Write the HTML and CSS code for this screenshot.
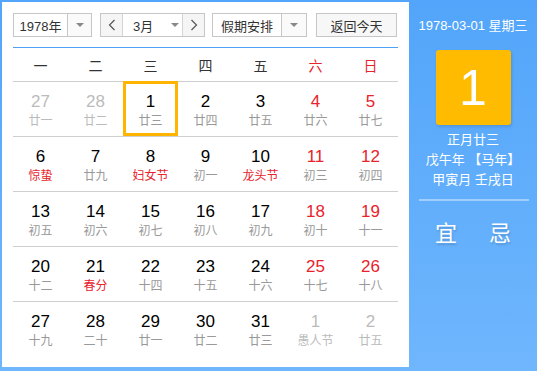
FILE: index.html
```html
<!DOCTYPE html>
<html lang="zh-CN">
<head>
    <meta charset="UTF-8">
    <title>万年历</title>
    <link rel="stylesheet" href="styles.css">
</head>
<body>
    <div class="calendar">
        <div class="main">
            <div class="controls">
                <div class="select year-select">
                    <span class="label">1978年</span>
                    <span class="arrow"><i class="tri"></i></span>
                </div>
                <div class="month-group">
                    <span class="nav-btn">
                        <svg width="8" height="12" viewBox="0 0 8 12"><polyline points="6.5,1 1.5,6 6.5,11" fill="none" stroke="#555" stroke-width="1.2"/></svg>
                    </span>
                    <span class="month-label">3月<i class="tri"></i></span>
                    <span class="nav-btn">
                        <svg width="8" height="12" viewBox="0 0 8 12"><polyline points="1.5,1 6.5,6 1.5,11" fill="none" stroke="#555" stroke-width="1.2"/></svg>
                    </span>
                </div>
                <div class="select holiday-select">
                    <span class="label">假期安排</span>
                    <span class="arrow"><i class="tri"></i></span>
                </div>
                <button class="today-btn">返回今天</button>
            </div>
            <div class="week-head">
                <span>一</span><span>二</span><span>三</span><span>四</span><span>五</span>
                <span class="weekend">六</span><span class="weekend">日</span>
            </div>
            <div id="days"></div>
        </div>
        <div class="side">
            <div class="side-date">1978-03-01 星期三</div>
            <div class="big-day">1</div>
            <div class="lunar-info">
                <p>正月廿三</p>
                <p>戊午年 【马年】</p>
                <p>甲寅月 壬戌日</p>
            </div>
            <div class="side-line"></div>
            <div class="yi-ji">
                <span>宜</span>
                <span>忌</span>
            </div>
        </div>
    </div>

    <script>
        // day, lunar text, flags: o = other month, f = festival, s = selected
        const weeks = [
            [[27, '廿一', 'o'], [28, '廿二', 'o'], [1, '廿三', 's'], [2, '廿四'], [3, '廿五'], [4, '廿六'], [5, '廿七']],
            [[6, '惊蛰', 'f'], [7, '廿九'], [8, '妇女节', 'f'], [9, '初一'], [10, '龙头节', 'f'], [11, '初三'], [12, '初四']],
            [[13, '初五'], [14, '初六'], [15, '初七'], [16, '初八'], [17, '初九'], [18, '初十'], [19, '十一']],
            [[20, '十二'], [21, '春分', 'f'], [22, '十四'], [23, '十五'], [24, '十六'], [25, '十七'], [26, '十八']],
            [[27, '十九'], [28, '二十'], [29, '廿一'], [30, '廿二'], [31, '廿三'], [1, '愚人节', 'o'], [2, '廿五', 'o']]
        ];

        const output = weeks.map(week => `
            <div class="week">
                ${week.map((d, i) => {
                    const flag = d[2] || '';
                    let cls = 'day';
                    if (i > 4) cls += ' weekend';
                    if (flag === 'o') cls += ' other';
                    if (flag === 's') cls += ' selected';
                    const lunarCls = flag === 'f' ? 'lunar festival' : 'lunar';
                    return `<div class="${cls}"><span class="num">${d[0]}</span><span class="${lunarCls}">${d[1]}</span></div>`;
                }).join('')}
            </div>
        `).join('');

        document.getElementById('days').innerHTML = output;
    </script>
</body>
</html>
```

FILE: styles.css
```css
body {
    margin: 0;
    padding: 0;
    font-family: "Liberation Sans", "Noto Sans CJK SC", sans-serif;
    background: #fff;
}
.calendar {
    display: flex;
    width: 537px;
    height: 371px;
    box-sizing: border-box;
    padding: 2px 0 4px 2px;
    background: linear-gradient(#52a5fa, #6fb6fd);
}
.main {
    width: 407px;
    background: #fff;
    padding: 11px 11px 0 11px;
    box-sizing: border-box;
}
.controls {
    display: flex;
    height: 24px;
    padding-bottom: 10px;
    border-bottom: 1px solid #4ea1f7;
}
.select {
    display: flex;
    height: 24px;
    box-sizing: border-box;
    border: 1px solid #c6c6c6;
    font-size: 13px;
    color: #333;
}
.select .label {
    flex: 1;
    display: flex;
    align-items: center;
    justify-content: center;
    border-right: 1px solid #c6c6c6;
}
.select .arrow {
    width: 23px;
    display: flex;
    align-items: center;
    justify-content: center;
    background: #fafafa;
}
.tri {
    display: inline-block;
    width: 0;
    height: 0;
    border-left: 4px solid transparent;
    border-right: 4px solid transparent;
    border-top: 4px solid #888;
}
.year-select {
    width: 79px;
}
.month-group {
    display: flex;
    width: 105px;
    height: 24px;
    box-sizing: border-box;
    margin-left: 8px;
    border: 1px solid #c6c6c6;
    font-size: 13px;
    color: #333;
}
.nav-btn {
    width: 21px;
    display: flex;
    align-items: center;
    justify-content: center;
    background: #f5f5f5;
}
.nav-btn:first-child {
    border-right: 1px solid #d4d4d4;
}
.nav-btn:last-child {
    border-left: 1px solid #d4d4d4;
}
.month-label {
    flex: 1;
    display: flex;
    align-items: center;
    padding-left: 10px;
    gap: 18px;
}
.holiday-select {
    width: 95px;
    margin-left: 7px;
}
.holiday-select .arrow {
    width: 24px;
}
.today-btn {
    margin-left: 9px;
    width: 81px;
    height: 24px;
    border: 1px solid #c6c6c6;
    background: #f7f7f7;
    font-family: inherit;
    font-size: 13px;
    color: #333;
    padding: 0;
}
.week-head {
    display: flex;
    height: 33px;
    align-items: center;
    font-size: 14px;
    color: #333;
}
.week-head span {
    flex: 1;
    text-align: center;
}
.weekend {
    color: #e8232c;
}
.week {
    display: flex;
    height: 55px;
    box-sizing: border-box;
    border-top: 1px solid #cfcfcf;
}
.day {
    flex: 1;
    display: flex;
    flex-direction: column;
    align-items: center;
    box-sizing: border-box;
    border: 3px solid transparent;
    margin-top: -1px;
    height: 55px;
    padding-top: 9px;
}
.day .num {
    font-size: 17px;
    line-height: 18px;
    color: #000;
}
.day.weekend .num {
    color: #e8232c;
}
.day .lunar {
    font-size: 12px;
    line-height: 16px;
    margin-top: 2px;
    color: #999;
}
.day .lunar.festival {
    color: #e8232c;
}
.day.other .num,
.day.other .lunar {
    color: #bbb;
}
.day.selected {
    border-color: #ffb400;
}
.side {
    flex: 1;
    display: flex;
    flex-direction: column;
    align-items: center;
    color: #fff;
    padding-top: 15px;
}
.side-date {
    font-size: 13px;
    line-height: 18px;
}
.big-day {
    width: 75px;
    height: 75px;
    margin-top: 15px;
    background: #ffbb00;
    border-radius: 3px;
    box-shadow: 1px 2px 3px rgba(0, 0, 0, 0.12);
    display: flex;
    align-items: center;
    justify-content: center;
    font-size: 50px;
    line-height: 1;
}
.lunar-info {
    margin-top: 5px;
    text-align: center;
    font-size: 13px;
}
.lunar-info p {
    margin: 0;
    line-height: 20px;
}
.side-line {
    align-self: stretch;
    height: 2px;
    margin: 9px 8px 0 10px;
    background: rgba(255, 255, 255, 0.4);
}
.yi-ji {
    display: flex;
    gap: 32px;
    margin-top: 14px;
    font-size: 22px;
    text-shadow: 1px 2px 2px rgba(0, 0, 0, 0.15);
}
```
